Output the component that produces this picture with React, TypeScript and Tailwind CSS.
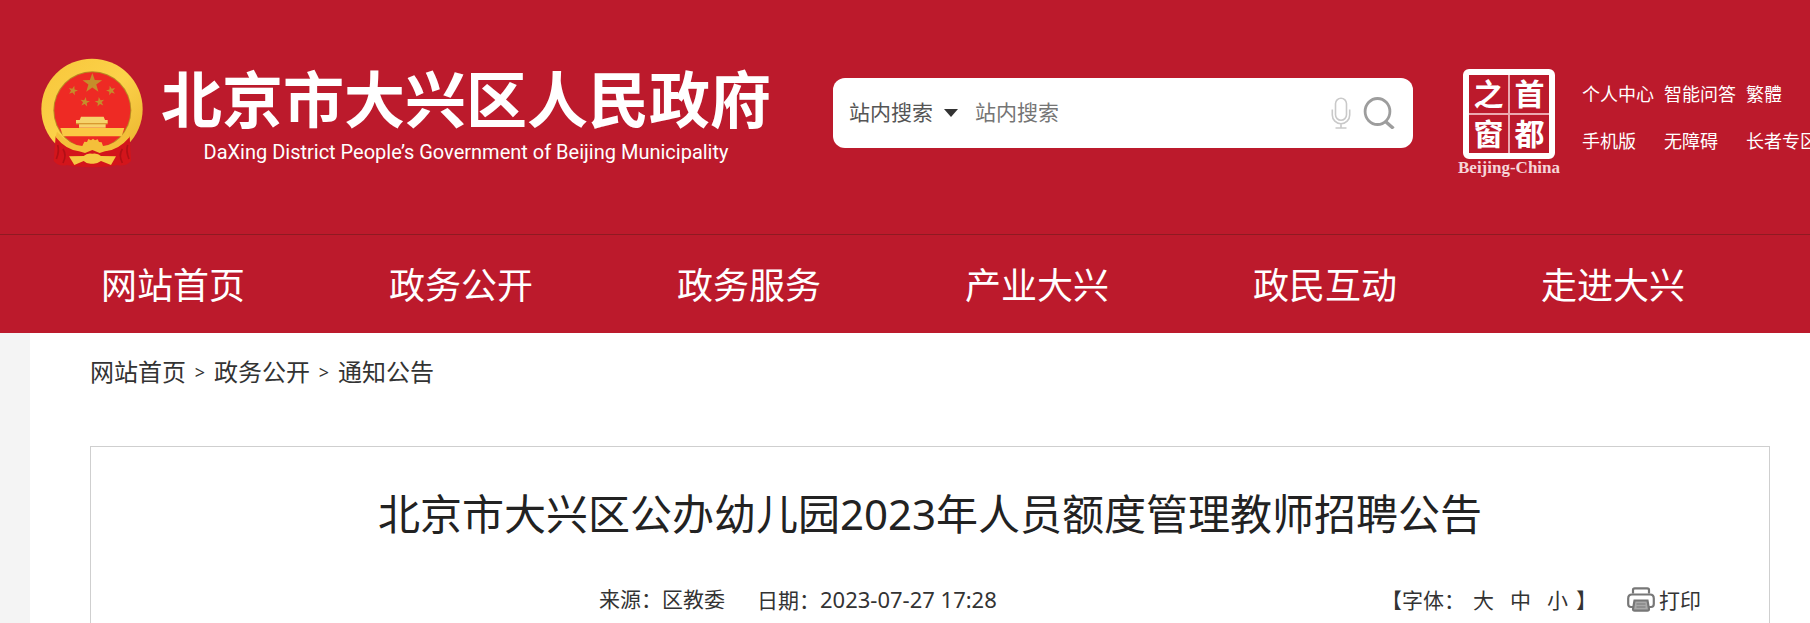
const navItems = ['网站首页', '政务公开', '政务服务', '产业大兴', '政民互动', '走进大兴'];

const quickLinks = ['个人中心', '智能问答', '繁體', '手机版', '无障碍', '长者专区'];

const crumbs = ['网站首页', '政务公开', '通知公告'];

const STAR = '0,-10 2.4,-3.2 9.5,-3.1 3.8,1.2 5.9,8.1 0,4 -5.9,8.1 -3.8,1.2 -9.5,-3.1 -2.4,-3.2';

const Emblem = () => (
  <svg viewBox="34 26 306 328" className="w-[102px] h-[110px] shrink-0" aria-hidden="true">
    <defs>
      <linearGradient id="gold" x1="0" y1="0" x2="1" y2="1">
        <stop offset="0" stopColor="#f7c63a" />
        <stop offset="0.5" stopColor="#fcd24a" />
        <stop offset="1" stopColor="#e9b22c" />
      </linearGradient>
    </defs>
    <ellipse cx="187" cy="178" rx="152" ry="151" fill="url(#gold)" />
    <circle cx="188" cy="182" r="117" fill="#b98a22" />
    <circle cx="188" cy="182" r="114" fill="#ee2a24" />
    <g fill="#c58d2b">
      <polygon points={STAR} transform="translate(188 101) scale(3.1)" />
      <polygon points={STAR} transform="translate(130 123) rotate(15) scale(1.5)" />
      <polygon points={STAR} transform="translate(244 123) rotate(-15) scale(1.5)" />
      <polygon points={STAR} transform="translate(166 157) rotate(10) scale(1.5)" />
      <polygon points={STAR} transform="translate(210 157) rotate(-10) scale(1.5)" />
    </g>
    {/* gate tower */}
    <path d="M154 201 H222 L226 211 H234 V221 H228 V234 H148 V221 H139 V211 H150 Z" fill="#f6d36b" />
    <path d="M139 220 H234 V224 H139 Z" fill="#d99a30" />
    <path d="M92 235 H284 L276 260 H100 Z" fill="#fbc844" />
    {/* ribbons and cog wheel */}
    <path
      d="M78 260 Q104 294 150 304 L188 300 L226 304 Q272 294 300 260 L304 334 Q288 352 262 346 L244 350 Q188 356 132 350 L112 346 Q88 352 72 334 Z"
      fill="#d3151b"
    />
    <path
      d="M82 246 Q118 286 158 289 L164 276 L172 277 L176 268 L184 272 L190 267 L196 272 L204 269 L208 277 L216 278 L220 289 Q256 286 294 246 L300 262 Q266 302 226 305 L210 310 L188 301 L166 310 L148 305 Q108 300 78 262 Z"
      fill="#f4bf3a"
    />
    <path
      d="M118 320 L162 319 Q172 309 188 312 Q204 309 214 319 L259 320 L244 346 L214 334 Q200 344 188 342 Q172 344 162 334 L134 346 Z"
      fill="#f6c843"
    />
    <path
      d="M84 286 Q90 304 80 328 M100 298 Q112 316 100 340 M294 286 Q288 304 298 328 M278 298 Q266 316 278 340"
      stroke="#b01016"
      strokeWidth="5"
      fill="none"
    />
  </svg>
);

const MicIcon = () => (
  <svg viewBox="0 0 20 32" className="w-5 h-8" fill="none" stroke="#c9c9c9" strokeWidth="1.6" aria-hidden="true">
    <rect x="4.5" y="1.3" width="11" height="22" rx="5.5" />
    <path d="M1.3 12.5 V18 A8.7 8.7 0 0 0 18.7 18 V12.5 M10 26.7 V30.5 M4.5 31 H15.5" />
  </svg>
);

const SearchIcon = () => (
  <svg viewBox="0 0 32 32" className="w-8 h-8" fill="none" stroke="#9d9d9d" strokeWidth="2.8" aria-hidden="true">
    <ellipse cx="14.5" cy="14.5" rx="12.4" ry="13" />
    <path d="M22.5 24.5 L30.5 31.5" strokeWidth="3.4" />
  </svg>
);

const PrintIcon = () => (
  <svg viewBox="0 0 28 25" className="w-7 h-[25px]" fill="none" stroke="#777" strokeWidth="2.2" aria-hidden="true">
    <path d="M6 6.5 V3 Q6 1.3 7.7 1.3 H20.3 Q22 1.3 22 3 V6.5" />
    <path d="M7 20 H4 Q1.2 20 1.2 17 V11.5 Q1.2 7.5 5 7.5 H23 Q26.8 7.5 26.8 11.5 V17 Q26.8 20 24 20 H21" />
    <path d="M7.5 13.5 H20.5 L22 22 Q22 23.6 20.3 23.6 H7.7 Q6 23.6 6 22 Z" fill="#a9a9a9" />
    <path d="M9.5 17 H18.5 M9.5 20 H18.5" strokeWidth="1.2" />
  </svg>
);

const CapitalWindow = () => (
  <a href="#" className="w-[104px] shrink-0 flex flex-col items-center text-white whitespace-nowrap">
    <span className="grid grid-cols-2 w-[92px] h-[90px] border-[6px] border-white rounded-md text-[30px] leading-[38px] font-bold text-center">
      <span className="border-r border-b border-[#eba9b0]">之</span>
      <span className="border-l border-b border-[#eba9b0]">首</span>
      <span className="border-r border-t border-[#eba9b0]">窗</span>
      <span className="border-l border-t border-[#eba9b0]">都</span>
    </span>
    <span className="mt-px font-['Liberation_Serif',serif] font-bold text-[17px] leading-4 text-[#f6d5d9]">
      Beijing-China
    </span>
  </a>
);

const Header = () => (
  <header className="bg-[#bc1a2c] text-white">
    <div className="h-[234px] flex items-start pl-[41px] overflow-hidden">
      <a href="#" className="flex shrink-0 pt-[58px]">
        <Emblem />
        <span className="flex flex-col items-center ml-[18px]">
          <span className="text-[61px] leading-[84px] font-bold whitespace-nowrap">北京市大兴区人民政府</span>
          <span className="font-[Roboto,sans-serif] text-[20px] leading-5 whitespace-nowrap">
            DaXing District People’s Government of Beijing Municipality
          </span>
        </span>
      </a>

      <form
        className="mt-[78px] ml-[62px] w-[580px] h-[70px] shrink-0 bg-white rounded-xl flex items-center pl-4 pr-[18px] text-[21px]"
        onSubmit={(e) => e.preventDefault()}
      >
        <div className="relative w-[126px] shrink-0">
          <select aria-label="搜索范围" className="appearance-none w-full bg-transparent text-[#555] outline-none">
            <option>站内搜索</option>
          </select>
          <svg viewBox="0 0 14 8" className="absolute left-[95px] top-3 w-3.5 h-2 pointer-events-none" aria-hidden="true">
            <path d="M0 0 H14 L7 8 Z" fill="#333" />
          </svg>
        </div>
        <input
          type="text"
          aria-label="站内搜索"
          placeholder="站内搜索"
          className="flex-1 min-w-0 text-[#555] placeholder:text-[#757575] outline-none"
        />
        <button type="button" aria-label="语音搜索">
          <MicIcon />
        </button>
        <button type="submit" aria-label="搜索" className="ml-3">
          <SearchIcon />
        </button>
      </form>

      <div className="flex items-start pt-[69px] pl-11 shrink-0">
        <CapitalWindow />
        <div className="grid grid-cols-[82px_82px_82px] gap-y-5 ml-[21px] pt-3 text-[18px] leading-[27px] whitespace-nowrap">
          {quickLinks.map((link) => (
            <a key={link} href="#">
              {link}
            </a>
          ))}
        </div>
      </div>
    </div>

    <nav className="h-[99px] border-t border-[#8f1a22] overflow-hidden">
      <ul className="grid grid-cols-[repeat(6,288px)] pl-[101px] text-[36px] leading-[102px]">
        {navItems.map((item) => (
          <li key={item}>
            <a href="#">{item}</a>
          </li>
        ))}
      </ul>
    </nav>
  </header>
);

const Article = () => (
  <article className="mt-[53px] flex-1 border border-b-0 border-[#cfcfcf] text-[21px] text-[#333]">
    <h1 className="pt-9 text-[42px] leading-[62px] text-center text-[#222]">
      北京市大兴区公办幼儿园2023年人员额度管理教师招聘公告
    </h1>
    <div className="flex items-center justify-between mt-[38px] pl-[508px] pr-[68px] leading-8 whitespace-nowrap">
      <p className="flex gap-8">
        <span>来源：区教委</span>
        <span>
          日期：<time className="text-[22px]">2023-07-27 17:28</time>
        </span>
      </p>
      <div className="flex items-center">
        <span>【字体：</span>
        <span className="flex gap-4 ml-2">
          <button type="button">大</button>
          <button type="button">中</button>
          <button type="button">小</button>
        </span>
        <span className="ml-2">】</span>
        <button type="button" className="flex items-center gap-1 ml-[30px]">
          <PrintIcon />
          打印
        </button>
      </div>
    </div>
  </article>
);

export default function App() {
  return (
    <div className="min-h-screen flex flex-col overflow-hidden bg-[#f4f4f4] font-['Noto_Sans','Noto_Sans_CJK_SC',sans-serif]">
      <Header />
      <main className="flex-1 flex flex-col ml-[30px] pl-[60px] pr-10 pt-[18px] bg-white">
        <nav aria-label="当前位置" className="flex items-center text-[24px] leading-[42px] text-[#333]">
          {crumbs.map((crumb, index) => (
            <span key={crumb} className="flex items-center">
              {index > 0 && <span className="w-7 text-center text-[18px]">&gt;</span>}
              <a href="#">{crumb}</a>
            </span>
          ))}
        </nav>
        <Article />
      </main>
    </div>
  );
}
